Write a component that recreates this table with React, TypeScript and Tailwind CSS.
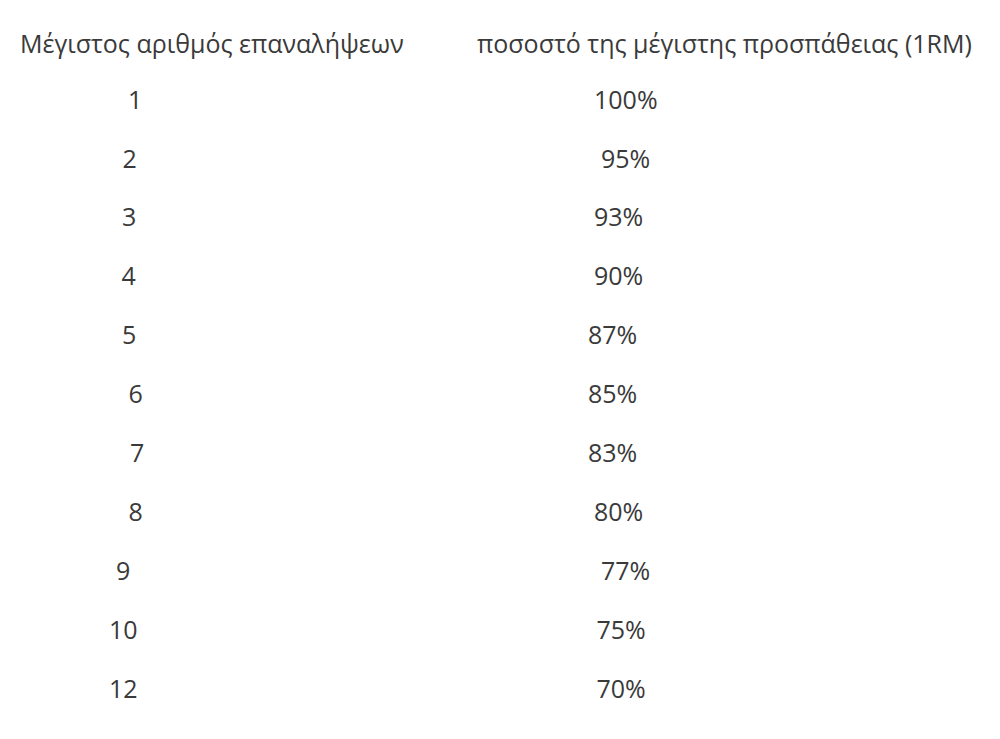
const rows = [
  { reps: "1", pct: "100%", repsPad: "pl-[128px]", pctPad: "pl-[114px]" },
  { reps: "2", pct: "95%", repsPad: "pl-[122.5px]", pctPad: "pl-[121px]" },
  { reps: "3", pct: "93%", repsPad: "pl-[122px]", pctPad: "pl-[114px]" },
  { reps: "4", pct: "90%", repsPad: "pl-[121.5px]", pctPad: "pl-[114px]" },
  { reps: "5", pct: "87%", repsPad: "pl-[122px]", pctPad: "pl-[108px]" },
  { reps: "6", pct: "85%", repsPad: "pl-[128.5px]", pctPad: "pl-[108px]" },
  { reps: "7", pct: "83%", repsPad: "pl-[130px]", pctPad: "pl-[108px]" },
  { reps: "8", pct: "80%", repsPad: "pl-[128.5px]", pctPad: "pl-[114px]" },
  { reps: "9", pct: "77%", repsPad: "pl-[116px]", pctPad: "pl-[121px]" },
  { reps: "10", pct: "75%", repsPad: "pl-[109px]", pctPad: "pl-[116.5px]" },
  { reps: "12", pct: "70%", repsPad: "pl-[109px]", pctPad: "pl-[116.5px]" },
];

export default function App() {
  return (
    <div className="w-[1000px] h-[739px] bg-white text-[#3a3a3a] font-['Open_Sans',sans-serif] text-[25px] pt-[17px]">
      {/* Header */}
      <div className="flex items-center h-[53px]">
        <div className="w-[480px] pl-[20px]">Μέγιστος αριθμός επαναλήψεων</div>
        <div className="-ml-[3px]">ποσοστό της μέγιστης προσπάθειας (1RM)</div>
      </div>

      {/* Rows */}
      {rows.map((row) => (
        <div key={row.reps} className="flex items-center h-[58.9px]">
          <div className={`w-[480px] ${row.repsPad}`}>{row.reps}</div>
          <div className={row.pctPad}>{row.pct}</div>
        </div>
      ))}
    </div>
  );
}
